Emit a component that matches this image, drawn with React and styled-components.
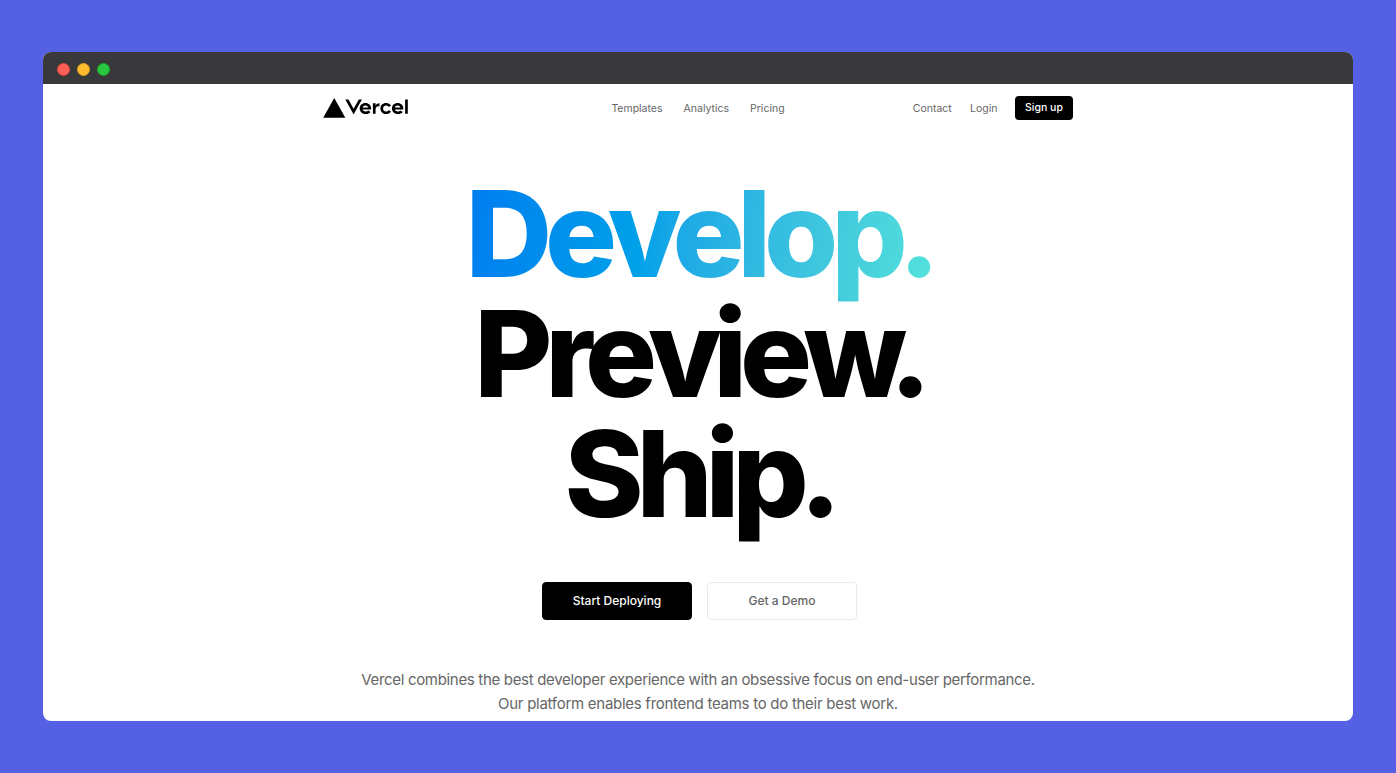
import React from "react";
import styled, { createGlobalStyle } from "styled-components";

const Global = createGlobalStyle`
  * { box-sizing: border-box; }
  body { margin: 0; background: #5461e4; font-family: Inter, "Liberation Sans", sans-serif; }
`;
const Stage = styled.div`
  height: 773px;
  padding: 52px 43px;
`;
const BrowserWindow = styled.div`
  height: 669px;
  border-radius: 8px;
  overflow: hidden;
  background: #fff;
`;
const TitleBar = styled.div`
  height: 32px;
  background: #39393b;
  display: flex;
  align-items: center;
  gap: 7px;
  padding: 2px 13.5px 0;
`;
const Light = styled.span`
  width: 13px;
  height: 13px;
  border-radius: 50%;
  background: ${(p) => p.$fill};
  border: 0.5px solid ${(p) => p.$edge};
`;
const Header = styled.header`
  width: 750px;
  height: 48px;
  margin: 0 auto;
  display: grid;
  grid-template-columns: 1fr auto 1fr;
  align-items: center;
`;
const Logo = styled.svg`
  display: block;
`;
const Nav = styled.nav`
  display: flex;
  gap: ${(p) => p.$gap}px;
  align-items: center;
  justify-content: flex-end;
`;
const NavLink = styled.a`
  padding-top: 2px;
  font-size: 10.5px;
  line-height: 16px;
  color: #666;
`;
const SignUp = styled.button`
  width: 58px;
  height: 24px;
  margin-left: -0.6px;
  padding: 0 0 2px;
  border: 0;
  border-radius: 4px;
  background: #000;
  color: #fff;
  font: 500 10.5px Inter, sans-serif;
`;
const Title = styled.h1`
  margin: 42px 0 0;
  display: flex;
  flex-direction: column;
  align-items: center;
  padding-left: 2.7px;
  font-size: 120px;
  line-height: 120px;
  font-weight: 800;
  letter-spacing: -7.2px;
  color: #000;
`;
const Line = styled.span`
  display: block;
  white-space: nowrap;
`;
const GradientLine = styled(Line)`
  padding-bottom: 12px;
  margin-bottom: -12px;
  background: linear-gradient(98deg, #007cf0, #00a1e9 38%, #1ba8e6 45%, #30b8e2 61%, #46cfdc 83%, #55e2dc);
  -webkit-background-clip: text;
  background-clip: text;
  color: transparent;
`;
const Kern = styled.span`
  margin-left: ${(p) => p.$by}px;
`;
const Actions = styled.div`
  display: flex;
  justify-content: center;
  gap: 15px;
  margin-top: 48px;
  padding-left: 3px;
`;
const Action = styled.button`
  width: 150px;
  height: 38px;
  padding: 0 0 2px;
  border-radius: 4px;
  border: 1px solid ${(p) => (p.$primary ? "#000" : "#eaeaea")};
  background: ${(p) => (p.$primary ? "#000" : "#fff")};
  color: ${(p) => (p.$primary ? "#fff" : "#666")};
  font: 500 12px Inter, sans-serif;
`;
const Description = styled.p`
  margin: 48px 0 0;
  text-align: center;
  font-size: 15px;
  line-height: 24px;
  color: #666;
`;
const Sentence = styled.span`
  display: block;
  letter-spacing: ${(p) => p.$tracking}px;
`;

export default function App() {
  return (
    <>
      <Global />
      <Stage>
        <BrowserWindow>
          <TitleBar>
            <Light $fill="#ff5f57" $edge="#e0443e" />
            <Light $fill="#febc2e" $edge="#dea123" />
            <Light $fill="#28c840" $edge="#1aab29" />
          </TitleBar>
          <Header>
            <Logo width="85" height="20" viewBox="0 0 284 65" preserveAspectRatio="none" aria-label="Vercel">
              <path d="M141.68 16.25c-11.04 0-19 7.2-19 18s8.96 18 20 18c6.67 0 12.55-2.64 16.19-7.09l-7.65-4.42c-2.02 2.21-5.09 3.5-8.54 3.5-4.79 0-8.86-2.5-10.37-6.5h28.02c.22-1.12.35-2.28.35-3.5 0-10.79-7.96-17.99-19-17.99zm-9.46 14.5c1.25-3.99 4.67-6.5 9.45-6.5 4.79 0 8.21 2.51 9.45 6.5h-18.9zm117.14-14.5c-11.04 0-19 7.2-19 18s8.96 18 20 18c6.67 0 12.55-2.64 16.19-7.09l-7.65-4.42c-2.02 2.21-5.09 3.5-8.54 3.5-4.79 0-8.86-2.5-10.37-6.5h28.02c.22-1.12.35-2.28.35-3.5 0-10.79-7.96-17.99-19-17.99zm-9.45 14.5c1.25-3.99 4.67-6.5 9.45-6.5 4.79 0 8.21 2.51 9.45 6.5h-18.9zm-39.03 3.5c0 6 3.92 10 10 10 4.12 0 7.21-1.87 8.8-4.92l7.68 4.43c-3.18 5.3-9.14 8.49-16.48 8.49-11.05 0-19-7.2-19-18s7.96-18 19-18c7.34 0 13.29 3.19 16.48 8.49l-7.68 4.43c-1.59-3.05-4.68-4.92-8.8-4.92-6.07 0-10 4-10 10zm82.48-29v46h-9v-46h9zM37.59.25l36.95 64H.64l36.95-64zm92.38 5l-27.71 48-27.71-48h10.39l17.32 30 17.32-30h10.39zm58.91 12v9.69c-1-.29-2.06-.49-3.2-.49-5.81 0-10 4-10 10v14.8h-9v-34h9v9.2c0-5.08 5.91-9.2 13.2-9.2z" />
            </Logo>
            <Nav $gap={21}>
              <NavLink>Templates</NavLink>
              <NavLink>Analytics</NavLink>
              <NavLink>Pricing</NavLink>
            </Nav>
            <Nav $gap={18.2}>
              <NavLink>Contact</NavLink>
              <NavLink>Login</NavLink>
              <SignUp>Sign up</SignUp>
            </Nav>
          </Header>
          <Title>
            <GradientLine>
              Develop<Kern $by={-2.5}>.</Kern>
            </GradientLine>
            <Line>
              Prev<Kern $by={-1.3}>iew</Kern>
              <Kern $by={-10.5}>.</Kern>
            </Line>
            <Line>
              Ship<Kern $by={-2.5}>.</Kern>
            </Line>
          </Title>
          <Actions>
            <Action $primary>Start Deploying</Action>
            <Action>Get a Demo</Action>
          </Actions>
          <Description>
            <Sentence $tracking={-0.32}>
              Vercel combines the best developer experience with an obsessive focus on end-user performance.
            </Sentence>
            <Sentence $tracking={-0.275}>Our platform enables frontend teams to do their best work.</Sentence>
          </Description>
        </BrowserWindow>
      </Stage>
    </>
  );
}
